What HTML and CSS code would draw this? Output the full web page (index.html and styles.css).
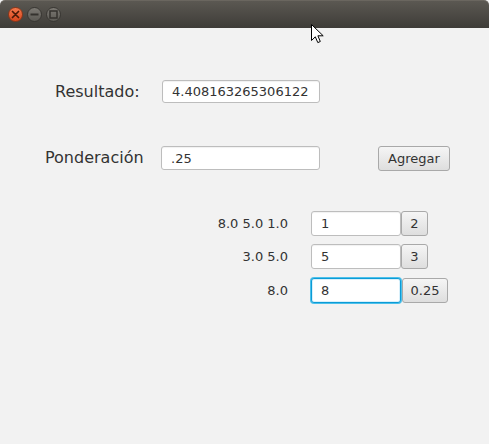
FILE: index.html
```html
<!DOCTYPE html>
<html>
<head>
<meta charset="utf-8">
<link rel="stylesheet" href="styles.css">
</head>
<body>
<div class="window">
  <div class="titlebar">
    <span class="wbtn close"><svg width="9" height="9" viewBox="0 0 9 9"><path d="M1.5 1.5L7.5 7.5M7.5 1.5L1.5 7.5" stroke="#4a1a08" stroke-width="1.7" stroke-linecap="round"/></svg></span>
    <span class="wbtn"><svg width="9" height="9" viewBox="0 0 9 9"><path d="M0.5 4.5H8.5" stroke="#34322e" stroke-width="2"/></svg></span>
    <span class="wbtn"><svg width="9" height="9" viewBox="0 0 9 9"><rect x="1" y="1" width="7" height="7" fill="none" stroke="#34322e" stroke-width="1.5"/></svg></span>
  </div>
  <div class="content">
    <div class="row-result">
      <span class="label big lab-result">Resultado:</span>
      <div class="field f-result">4.408163265306122</div>
    </div>
    <div class="row-pond">
      <span class="label big lab-pond">Ponderación</span>
      <div class="field f-pond">.25</div>
      <div class="btn b-agregar">Agregar</div>
    </div>
    <div class="list">
      <div class="item">
        <span class="label small item-label">8.0 5.0 1.0</span>
        <div class="field f-item">1</div>
        <div class="btn b-item">2</div>
      </div>
      <div class="item">
        <span class="label small item-label">3.0 5.0</span>
        <div class="field f-item">5</div>
        <div class="btn b-item">3</div>
      </div>
      <div class="item item-last">
        <span class="label small item-label">8.0</span>
        <div class="field f-item focused">8</div>
        <div class="btn b-item wide">0.25</div>
      </div>
    </div>
  </div>
  <svg class="cursor" width="13" height="20" viewBox="0 0 13 20"><path d="M0.5 0.5V16.5L4.3 12.8L6.8 18.6L9.3 17.5L6.9 11.8H12.2Z" fill="#fff" stroke="#000" stroke-width="1" stroke-linejoin="round"/></svg>
</div>
</body>
</html>
```
FILE: styles.css
```css
* { box-sizing: border-box; }
html, body { margin: 0; padding: 0; background: #f2f2f2; }
.window {
  position: relative;
  width: 489px;
  height: 444px;
  background: #f2f2f2;
  overflow: hidden;
  font-family: "DejaVu Sans", sans-serif;
  color: #333;
}
.titlebar {
  height: 28px;
  background: linear-gradient(#5b5852, #3e3c38);
  border-top: 1px solid #6a665f;
  border-radius: 5px 5px 0 0;
  display: flex;
  align-items: center;
  padding-left: 8px;
  gap: 4px;
}
.wbtn {
  width: 15px;
  height: 15px;
  border-radius: 50%;
  background: linear-gradient(#7c7973, #5b5954);
  border: 1px solid #393733;
  display: flex;
  align-items: center;
  justify-content: center;
}
.wbtn.close {
  background: linear-gradient(#f4784c, #d8461d);
  border-color: #8e3618;
}
.content {
  padding-top: 52px;
}
.label { color: #333; white-space: nowrap; }
.big { font-size: 16px; }
.small { font-size: 13px; }
.field {
  background: #fff;
  border: 1px solid #bdbdbd;
  border-radius: 3px;
  box-shadow: inset 0 1px 1px rgba(0,0,0,0.06);
  font-size: 13px;
  color: #333;
  display: flex;
  align-items: center;
  padding-left: 9px;
}
.btn {
  background: linear-gradient(#f5f5f5, #dedede);
  border: 1px solid #a9a9a9;
  border-radius: 3px;
  font-size: 13px;
  color: #333;
  display: flex;
  align-items: center;
  justify-content: center;
}
.row-result {
  display: flex;
  align-items: center;
  padding-left: 55px;
  height: 23px;
}
.lab-result { width: 107px; }
.f-result { width: 158px; height: 23px; }
.row-pond {
  display: flex;
  align-items: flex-start;
  padding-left: 45px;
  margin-top: 43px;
  height: 25px;
}
.lab-pond { width: 116px; height: 24px; line-height: 24px; }
.f-pond { width: 159px; height: 24px; }
.b-agregar { width: 72px; height: 25px; margin-left: 58px; }
.list {
  margin-top: 40px;
  display: flex;
  flex-direction: column;
  gap: 8px;
}
.item {
  display: flex;
  align-items: center;
  height: 25px;
}
.item-last { margin-top: 1px; }
.item-label { width: 288px; text-align: right; margin-right: 23px; }
.f-item { width: 90px; height: 25px; }
.f-item.focused {
  border: 1px solid #0b9bd6;
  box-shadow: 0 0 0 1px #4cc0ea, inset 0 0 0 1px #d8f0fb;
}
.b-item { width: 27px; height: 25px; }
.b-item.wide { width: 46px; margin-left: 1px; }
.cursor {
  position: absolute;
  left: 311px;
  top: 24px;
}
```
